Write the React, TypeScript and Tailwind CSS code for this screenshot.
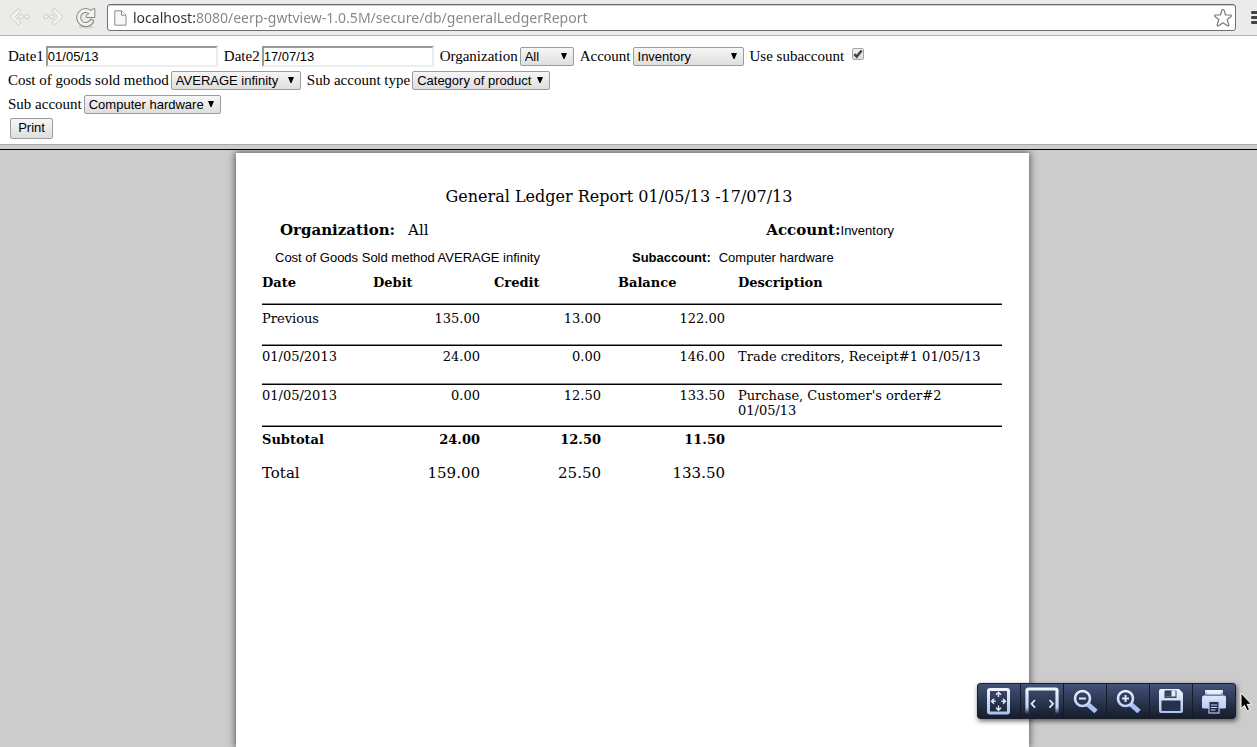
import React, { useState } from 'react'

const URL_TEXT = 'localhost:8080/eerp-gwtview-1.0.5M/secure/db/generalLedgerReport'

const ledgerRows = [
  { date: 'Previous', debit: '135.00', credit: '13.00', balance: '122.00', description: '', className: 'h-[41px]', pad: 'pt-[6px]' },
  { date: '01/05/2013', debit: '24.00', credit: '0.00', balance: '146.00', description: 'Trade creditors, Receipt#1 01/05/13', className: 'h-[39px]', pad: 'pt-[3px]' },
  { date: '01/05/2013', debit: '0.00', credit: '12.50', balance: '133.50', description: "Purchase, Customer's order#2 01/05/13", className: 'h-[42px]', pad: 'pt-[3px]' }
]

const rule = 'border-b border-black shadow-[inset_0_-1px_0_#888]'

/* Browser toolbar */

const BackIcon = () => (
  <svg width="22" height="20" viewBox="0 0 22 20" fill="#f4f4f3" stroke="#c9c9c7" strokeWidth="1">
    <path d="M9.5 1.5 L1 9.7 L9.5 18 L12 15.8 L6 9.7 L12 3.6 Z" strokeLinejoin="round" />
    <circle cx="12" cy="9.7" r="2.2" />
    <circle cx="18" cy="9.7" r="2.2" />
  </svg>
)

const ForwardIcon = () => (
  <svg width="22" height="20" viewBox="0 0 22 20" fill="#f4f4f3" stroke="#c9c9c7" strokeWidth="1">
    <path d="M12.5 1.5 L21 9.7 L12.5 18 L10 15.8 L16 9.7 L10 3.6 Z" strokeLinejoin="round" />
    <circle cx="4" cy="9.7" r="2.2" />
    <circle cx="10" cy="9.7" r="2.2" />
  </svg>
)

const ReloadIcon = () => (
  <svg width="22" height="22" viewBox="0 0 22 22" fill="none">
    <ellipse cx="11" cy="20" rx="8" ry="1.5" fill="#d4d4d2" />
    <path d="M16.5 14.5 A7 7 0 1 1 15.5 5.5" stroke="#858583" strokeWidth="5" strokeLinecap="round" />
    <path d="M19.8 1.5 V10.5 H11.2 V8.2 L14.8 6 L16.5 2.5 Z" fill="#f2f2f1" stroke="#858583" strokeLinejoin="round" />
    <path d="M16.5 14.5 A7 7 0 1 1 15.5 5.5" stroke="#f2f2f1" strokeWidth="3" strokeLinecap="round" />
  </svg>
)

const BrowserBar: React.FC = () => (
  <header className="flex h-9 items-start overflow-hidden border-b border-[#b6b4b2] bg-[#edebea] pt-1 pl-[9px]">
    <button type="button" aria-label="Back" className="mt-[3px] w-[33px] flex-none">
      <BackIcon />
    </button>
    <button type="button" aria-label="Forward" className="mt-[3px] w-[33px] flex-none">
      <ForwardIcon />
    </button>
    <button type="button" aria-label="Reload" className="mt-[3px] w-8 flex-none">
      <ReloadIcon />
    </button>
    <div className="flex h-[27px] min-w-0 flex-1 items-center rounded-[3px] border border-[#6f6e6d] bg-white pr-[2px] pl-[6px] shadow-[inset_0_1px_0_#ccc]">
      <svg width="13" height="16" viewBox="0 0 13 16" className="flex-none" fill="#f7f7f7" stroke="#8c8c8c">
        <path d="M0.8 0.8 H7.5 L12 5.2 V15.2 H0.8 Z" />
        <path d="M7.5 0.8 V5.2 H12" fill="#fff" />
      </svg>
      <input
        type="text"
        aria-label="Address"
        defaultValue={URL_TEXT}
        className="ml-[6px] min-w-0 flex-1 bg-[linear-gradient(to_right,#2e2e2e_62px,#858585_62px)] bg-clip-text font-['Noto_Sans',sans-serif] text-[14px] leading-5 text-transparent outline-none"
      />
      <button type="button" aria-label="Bookmark this page" className="flex-none">
        <svg width="20" height="20" viewBox="0 0 20 20" fill="#fff" stroke="#777" strokeWidth="1.2" strokeLinejoin="round">
          <path d="M10 1.5 Q10.8 1.5 11.2 2.6 L12.6 7 H17.4 Q19 7.3 18 8.5 L14.2 11.6 L15.8 16.8 Q15.9 18.4 14.4 17.7 L10 14.8 L5.6 17.7 Q4.1 18.4 4.2 16.8 L5.8 11.6 L2 8.5 Q1 7.3 2.6 7 H7.4 L8.8 2.6 Q9.2 1.5 10 1.5 Z" />
        </svg>
      </button>
    </div>
    <button type="button" aria-label="Menu" className="mt-[6px] ml-[15px] w-[6px] flex-none overflow-hidden">
      <svg width="16" height="14" viewBox="0 0 16 14" fill="#444" className="max-w-none">
        <rect x="0" y="1" width="16" height="3" rx="1.2" />
        <rect x="0" y="6" width="16" height="3" rx="1.2" />
        <rect x="0" y="11" width="16" height="3" rx="1.2" />
      </svg>
    </button>
  </header>
)

/* Report filter form */

interface FieldProps {
  id: string
  label: string
  children: React.ReactNode
}

const Field: React.FC<FieldProps> = ({ id, label, children }) => (
  <div className="flex items-center gap-[2px]">
    <label htmlFor={id} className="leading-6">{label}</label>
    {children}
  </div>
)

const DateField: React.FC<{ id: string; label: string; value: string }> = ({ id, label, value }) => (
  <Field id={id} label={label}>
    <input
      id={id}
      type="text"
      defaultValue={value}
      className="h-[21px] w-[172px] border-2 border-t-[#9a9a9a] border-r-[#ededed] border-b-[#ededed] border-l-[#9a9a9a] bg-white font-['Liberation_Sans',sans-serif] text-[13px] leading-4 outline-none"
    />
  </Field>
)

const SelectField: React.FC<{ id: string; label: string; value: string; width: string }> = ({ id, label, value, width }) => (
  <Field id={id} label={label}>
    <div className={`relative ${width}`}>
      <select
        id={id}
        defaultValue={value}
        className="block h-[19px] w-full appearance-none rounded-[2px] border border-[#9c9c9c] bg-linear-to-b from-[#f6f6f6] to-[#dedede] pt-px pl-[4px] font-['Liberation_Sans',sans-serif] text-[13px] leading-4 outline-none"
      >
        <option>{value}</option>
      </select>
      <svg width="6" height="6" viewBox="0 0 6 6" className="pointer-events-none absolute top-[6px] right-[7px]">
        <path d="M0 0 H6 L3.5 6 H2.5 Z" fill="#000" />
      </svg>
    </div>
  </Field>
)

const ReportForm: React.FC = () => {
  const [useSubaccount, setUseSubaccount] = useState(true)

  return (
    <form
      className="bg-white px-2 pt-2 pb-1 font-['Liberation_Serif',serif] text-[15px] text-black"
      onSubmit={(e) => e.preventDefault()}
    >
      <div className="flex h-6 items-center gap-[6px]">
        <DateField id="date1" label="Date1" value="01/05/13" />
        <DateField id="date2" label="Date2" value="17/07/13" />
        <SelectField id="organization" label="Organization" value="All" width="w-[54px]" />
        <SelectField id="account" label="Account" value="Inventory" width="w-[111px]" />
        <div className="flex items-center gap-2">
          <label htmlFor="subaccount">Use subaccount</label>
          <span className="relative mb-1 block size-3">
            <input
              id="subaccount"
              type="checkbox"
              checked={useSubaccount}
              onChange={(e) => setUseSubaccount(e.target.checked)}
              className="block size-3 appearance-none rounded-[2px] border border-[#a5a5a5] bg-linear-to-b from-[#f2f2f2] to-[#dcdcdc]"
            />
            {useSubaccount && (
              <svg width="12" height="12" viewBox="0 0 12 12" className="pointer-events-none absolute top-0 left-0" fill="none" stroke="#444" strokeWidth="2.4">
                <path d="M2.3 6.2 L4.7 8.6 L9.7 2.4" />
              </svg>
            )}
          </span>
        </div>
      </div>
      <div className="flex h-6 items-center gap-[6px]">
        <SelectField id="method" label="Cost of goods sold method" value="AVERAGE infinity" width="w-[130px]" />
        <SelectField id="subtype" label="Sub account type" value="Category of product" width="w-[138px]" />
      </div>
      <div className="flex h-6 items-center">
        <SelectField id="sub" label="Sub account" value="Computer hardware" width="w-[137px]" />
      </div>
      <div className="flex h-6 items-center pl-[2px]">
        <button
          type="submit"
          className="h-[21px] w-[43px] rounded-[2px] border border-[#9c9c9c] bg-linear-to-b from-[#f6f6f6] to-[#dedede] font-['Liberation_Sans',sans-serif] text-[13px] leading-4"
        >
          Print
        </button>
      </div>
    </form>
  )
}

/* Report page */

const LedgerTable: React.FC = () => (
  <table className="w-full table-fixed border-separate border-spacing-0 text-[13px] leading-[15px]">
    <colgroup>
      <col className="w-[111px]" />
      <col className="w-[121px]" />
      <col className="w-[124px]" />
      <col className="w-[120px]" />
      <col />
    </colgroup>
    <thead>
      <tr className="h-[33px] text-left align-top">
        <th className={`pt-[3px] ${rule}`}>Date</th>
        <th className={`pt-[3px] ${rule}`}>Debit</th>
        <th className={`pt-[3px] ${rule}`}>Credit</th>
        <th className={`pt-[3px] ${rule}`}>Balance</th>
        <th className={`pt-[3px] ${rule}`}>Description</th>
      </tr>
    </thead>
    <tbody>
      {ledgerRows.map((row, index) => (
        <tr key={index} className={`align-top ${row.className}`}>
          <td className={`${row.pad} ${rule}`}>{row.date}</td>
          <td className={`pr-[14px] text-right ${row.pad} ${rule}`}>{row.debit}</td>
          <td className={`pr-[17px] text-right ${row.pad} ${rule}`}>{row.credit}</td>
          <td className={`pr-[13px] text-right ${row.pad} ${rule}`}>{row.balance}</td>
          <td className={`pr-2 ${row.pad} ${rule}`}>{row.description}</td>
        </tr>
      ))}
    </tbody>
    <tfoot>
      <tr className="h-[37px] align-top font-bold">
        <td className="pt-[5px]">Subtotal</td>
        <td className="pt-[5px] pr-[14px] text-right">24.00</td>
        <td className="pt-[5px] pr-[17px] text-right">12.50</td>
        <td className="pt-[5px] pr-[13px] text-right">11.50</td>
        <td />
      </tr>
      <tr className="align-top text-[15px] leading-[18px]">
        <td>Total</td>
        <td className="pr-[14px] text-right">159.00</td>
        <td className="pr-[17px] text-right">25.50</td>
        <td className="pr-[13px] text-right">133.50</td>
        <td />
      </tr>
    </tfoot>
  </table>
)

const ReportPage: React.FC = () => (
  <article className="w-full max-w-[793px] bg-white pt-[34px] pr-[27px] pl-[26px] font-['DejaVu_Serif',serif] text-black shadow-[0_0_7px_1px_rgba(0,0,0,0.55)]">
    <h1 className="pr-[26px] text-center text-[16px] leading-5">General Ledger Report 01/05/13 -17/07/13</h1>
    <div className="mt-[13px] flex items-baseline pl-[18px] text-[15px] leading-5">
      <b>Organization:</b>
      <span className="ml-[13px]">All</span>
      <div className="mr-[108px] ml-auto flex items-baseline">
        <b>Account:</b>
        <span className="font-['Liberation_Sans',sans-serif] text-[13px]">Inventory</span>
      </div>
    </div>
    <div className="mt-2 flex pl-[13px] font-['Liberation_Sans',sans-serif] text-[13px] leading-[18px]">
      <span className="w-[357px]">Cost of Goods Sold method AVERAGE infinity</span>
      <b>Subaccount:</b>
      <span className="ml-2">Computer hardware</span>
    </div>
    <div className="mt-[5px]">
      <LedgerTable />
    </div>
  </article>
)

/* Floating viewer controls */

const IconDefs = () => (
  <svg width="0" height="0" className="absolute" aria-hidden="true">
    <defs>
      <linearGradient id="ice" gradientUnits="userSpaceOnUse" x1="0" y1="4" x2="0" y2="32">
        <stop offset="0" stopColor="#f4f7ff" />
        <stop offset="1" stopColor="#a9bff5" />
      </linearGradient>
      <linearGradient id="iceFade" gradientUnits="userSpaceOnUse" x1="0" y1="4" x2="0" y2="31">
        <stop offset="0" stopColor="#f4f7ff" />
        <stop offset="0.75" stopColor="#c3d2fa" />
        <stop offset="1" stopColor="#c3d2fa" stopOpacity="0" />
      </linearGradient>
    </defs>
  </svg>
)

const viewerTools = [
  {
    label: 'Fit to page',
    icon: (
      <>
        <rect x="10.5" y="6.5" width="20" height="23.5" rx="1.5" fill="none" stroke="url(#ice)" strokeWidth="3" />
        <g fill="none" stroke="#dfe7fd" strokeWidth="1.4">
          <path d="M18 11.8 L20.5 9.3 L23 11.8 M20.5 9.5 V14" />
          <path d="M18 24.7 L20.5 27.2 L23 24.7 M20.5 27 V22.5" />
          <path d="M16 15.7 L13.5 18.2 L16 20.7 M13.7 18.2 H17.7" />
          <path d="M25 15.7 L27.5 18.2 L25 20.7 M27.3 18.2 H23.3" />
        </g>
      </>
    )
  },
  {
    label: 'Fit to width',
    icon: (
      <>
        <path d="M6 31 V7.5 Q6 6 7.5 6 H34.5 Q36 6 36 7.5 V31" fill="none" stroke="url(#iceFade)" strokeWidth="3.2" />
        <path d="M14 17 L10.5 20.8 L14 24.6 M28.5 17 L32 20.8 L28.5 24.6" fill="none" stroke="#dfe7fd" strokeWidth="1.8" />
      </>
    )
  },
  {
    label: 'Zoom out',
    icon: (
      <>
        <path d="M23.5 21 L32 28.5" stroke="#a9c0f8" strokeWidth="5" />
        <circle cx="18.5" cy="15.5" r="7.5" fill="none" stroke="url(#ice)" strokeWidth="2.6" />
        <path d="M15 15.5 H22" stroke="#dfe7fd" strokeWidth="2" />
      </>
    )
  },
  {
    label: 'Zoom in',
    icon: (
      <>
        <path d="M23.5 21 L32 28.5" stroke="#a9c0f8" strokeWidth="5" />
        <circle cx="18.5" cy="15.5" r="7.5" fill="none" stroke="url(#ice)" strokeWidth="2.6" />
        <path d="M15 15.5 H22 M18.5 12 V19" stroke="#dfe7fd" strokeWidth="2" />
      </>
    )
  },
  {
    label: 'Save',
    icon: (
      <>
        <path d="M11 6 H29 L33 10 V28 Q33 30 31 30 H11 Q9 30 9 28 V8 Q9 6 11 6 Z" fill="url(#ice)" />
        <rect x="14.5" y="7.5" width="12" height="7.5" fill="#35435f" />
        <rect x="16" y="7.5" width="9.5" height="6" fill="#e6ecfe" />
        <rect x="16" y="7.5" width="5.5" height="6" fill="#35435f" />
        <rect x="11.5" y="17.5" width="19" height="10.5" fill="#27314b" />
      </>
    )
  },
  {
    label: 'Print page',
    icon: (
      <>
        <path d="M13 7 H29 Q30 7 30 8 V12 H12 V8 Q12 7 13 7 Z" fill="url(#ice)" />
        <path d="M11 12.5 H31 Q33 12.5 33 14.5 V24 Q33 25.5 31.5 25.5 H10.5 Q9 25.5 9 24 V14.5 Q9 12.5 11 12.5 Z" fill="url(#ice)" />
        <path d="M13 9.5 V12 H29 V9.5" stroke="#5e6f99" strokeWidth="1" fill="none" />
        <rect x="16" y="18.5" width="10" height="11.5" fill="#1c2539" stroke="#b5c7f8" strokeWidth="1.2" />
        <path d="M17.8 22 H24.2 M17.8 24.5 H24.2 M17.8 27 H22.5" stroke="#cdd9fb" strokeWidth="1.2" />
      </>
    )
  }
]

const ViewerToolbar: React.FC = () => (
  <div
    role="toolbar"
    aria-label="Document controls"
    className="absolute right-[21px] bottom-[28px] flex overflow-hidden rounded-[3px] border border-[#1b1f29] bg-linear-to-b from-[#43527a] to-[#161d2b] shadow-[1px_2px_5px_rgba(0,0,0,0.6)]"
  >
    {viewerTools.map((tool) => (
      <button key={tool.label} type="button" aria-label={tool.label} className="h-[34px] w-[43px] border-r border-[#151a26] last:w-[42px] last:border-r-0">
        <svg width="42" height="34" viewBox="0 1 42 34">{tool.icon}</svg>
      </button>
    ))}
  </div>
)

const App: React.FC = () => (
  <div className="flex h-screen min-h-[480px] flex-col overflow-hidden bg-white">
    <BrowserBar />
    <ReportForm />
    <div className="h-[6px] flex-none border-t border-b border-t-[#a9a9a9] border-b-black bg-[#ccc]" />
    <main className="relative flex min-h-0 flex-1 justify-center overflow-hidden bg-[#ccc] pt-[3px] pl-2">
      <ReportPage />
      <IconDefs />
      <ViewerToolbar />
      <svg width="12" height="20" viewBox="0 0 12 20" className="pointer-events-none absolute right-[5px] bottom-[35px]">
        <path d="M1 1 V16.5 L4.5 13.3 L7 18.8 L9.6 17.6 L7.2 12.3 H11.5 Z" fill="#000" stroke="#fff" strokeWidth="1" />
      </svg>
    </main>
  </div>
)

export default App
